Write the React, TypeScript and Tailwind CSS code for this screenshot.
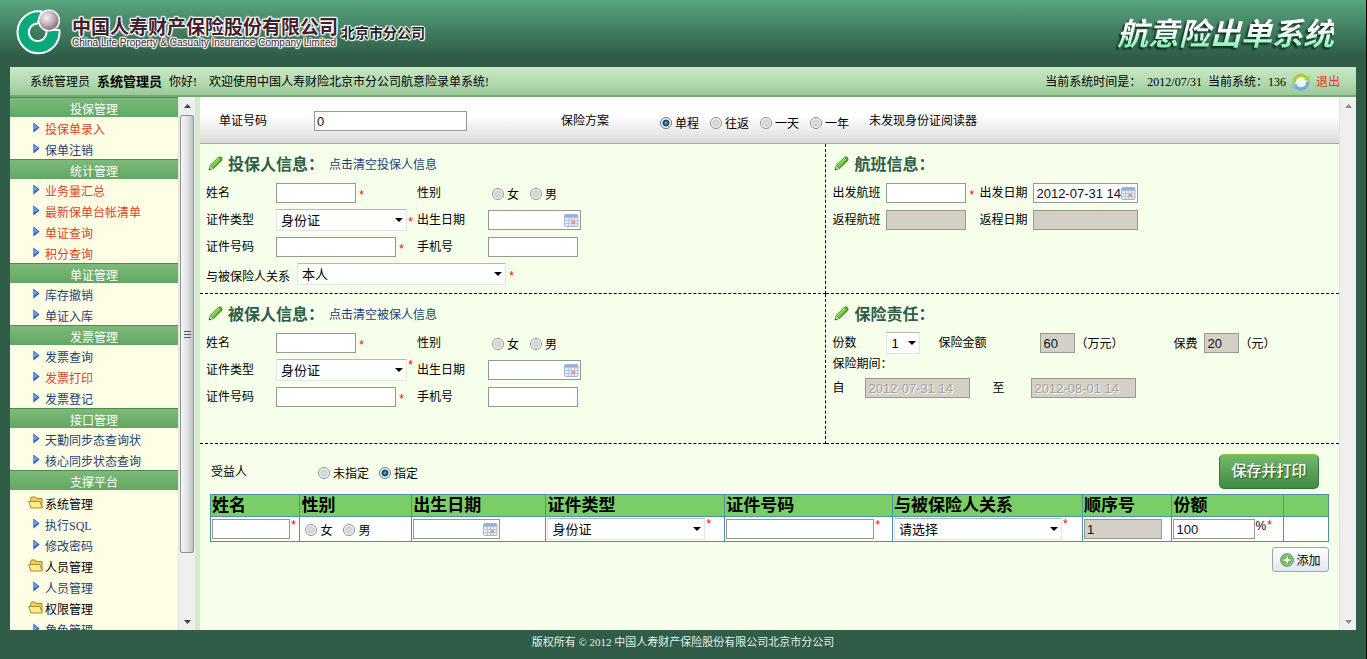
import type { ReactNode } from 'react';

type MenuItem = { text: string; hot?: boolean; folder?: boolean };

const menu: { title: string; items: MenuItem[] }[] = [
  { title: '投保管理', items: [{ text: '投保单录入', hot: true }, { text: '保单注销' }] },
  {
    title: '统计管理',
    items: [
      { text: '业务量汇总', hot: true },
      { text: '最新保单台帐清单', hot: true },
      { text: '单证查询', hot: true },
      { text: '积分查询', hot: true },
    ],
  },
  { title: '单证管理', items: [{ text: '库存撤销' }, { text: '单证入库' }] },
  { title: '发票管理', items: [{ text: '发票查询' }, { text: '发票打印', hot: true }, { text: '发票登记' }] },
  { title: '接口管理', items: [{ text: '天勤同步态查询状' }, { text: '核心同步状态查询' }] },
  {
    title: '支撑平台',
    items: [
      { text: '系统管理', folder: true },
      { text: '执行SQL' },
      { text: '修改密码' },
      { text: '人员管理', folder: true },
      { text: '人员管理' },
      { text: '权限管理', folder: true },
      { text: '角色管理' },
    ],
  },
];

function Logo() {
  return (
    <svg width="46" height="46" viewBox="0 0 46 46" className="shrink-0">
      <defs>
        <radialGradient id="ball" cx="0.38" cy="0.35" r="0.7">
          <stop offset="0" stopColor="#f8f0f3" />
          <stop offset="0.5" stopColor="#c4b0ba" />
          <stop offset="1" stopColor="#7b606e" />
        </radialGradient>
      </defs>
      <path
        d="M27 2.6 A21 21 0 1 0 44.4 21 H31.2 A8.8 8.8 0 1 1 22.5 14.4 Z"
        fill="#08a97b"
        stroke="#fff"
        strokeWidth="2"
        strokeLinejoin="round"
      />
      <circle cx="34" cy="11.5" r="10.4" fill="url(#ball)" stroke="#fff" strokeWidth="1.4" />
    </svg>
  );
}

function Pencil() {
  return (
    <svg width="15" height="15" viewBox="0 0 15 15" className="shrink-0">
      <path d="M1 14 L2.2 9 L10 1.2 Q12 -0.2 13.8 1.5 Q15 3.2 13.8 5 L6 12.6 Z" fill="#3f9a26" />
      <path d="M3.4 10.2 L11.4 2.2 L12.8 3.6 L5 11.6 Z" fill="#86d148" />
      <path d="M3.2 9.6 L11 1.8" stroke="#d2f2a4" strokeWidth="0.9" />
      <path d="M1 14 L2.2 9.4 L5.6 12.6 Z" fill="#cfe0a8" stroke="#4c8a3a" strokeWidth="0.6" />
      <path d="M0.8 14.3 L1.4 12.2 L2.9 13.5 Z" fill="#333" />
    </svg>
  );
}

function Calendar() {
  return (
    <svg width="15" height="13" viewBox="0 0 15 13" className="pointer-events-none absolute right-[2px] top-[4px]">
      <rect x="0.5" y="0.5" width="13.5" height="12" rx="1" fill="#e4ebf6" stroke="#a3b6d6" />
      <rect x="1" y="1" width="12.5" height="2.6" fill="#93afde" />
      <path d="M1.5 6.5h12M1.5 9.5h12M4.5 4v8M7.5 4v8M10.5 4v8" stroke="#b6c6e0" strokeWidth="1" />
      <rect x="8" y="7" width="3" height="3" fill="#e89a7c" />
    </svg>
  );
}

function Refresh() {
  return (
    <svg width="18" height="20" viewBox="0 0 18 20">
      <circle cx="9" cy="10" r="6.4" fill="#eef7e6" />
      <path d="M2.2 10.6 A6.9 6.9 0 0 1 15.4 7.4" fill="none" stroke="#a9cf3a" strokeWidth="3.4" />
      <path d="M12 7.6 L17.8 3.6 L17.6 9.8 Z" fill="#a9cf3a" />
      <path d="M15.8 9.6 A6.9 6.9 0 0 1 2.6 12.8" fill="none" stroke="#72a9ea" strokeWidth="3.4" />
      <path d="M6 12.6 L0.2 16.6 L0.4 10.4 Z" fill="#8fbdf2" />
    </svg>
  );
}

function Arrow() {
  return (
    <svg width="7" height="11" viewBox="0 0 7 11">
      <path d="M0.4 0.4 L6.6 5.5 L0.4 10.6 Z" fill="#2458c0" />
      <path d="M1.2 2 L5 5.2 L1.2 7.4 Z" fill="#6fa4f4" />
    </svg>
  );
}

function Folder() {
  return (
    <svg width="16" height="13" viewBox="0 0 16 13">
      <path d="M2.5 11.5 V2.5 L3.5 1 H7 L8.2 2.5 H14 V11.5 Z" fill="#f0cf58" stroke="#a5852a" />
      <path d="M3 12 L0.6 5.5 H12 L14.2 12 Z" fill="#fcec8c" stroke="#b08f30" />
    </svg>
  );
}

function Star({ high }: { high?: boolean }) {
  return (
    <span className={`w-[7px] shrink-0 text-center font-[Liberation_Sans] text-[12px] leading-[12px] text-[#f00] ${high ? 'self-start' : 'pt-[4px]'}`}>*</span>
  );
}

const box = 'h-[20px] border border-[#939a91] px-[2px] pt-px font-[Liberation_Sans] text-[13px] leading-[17px] text-[#111]';

function Text({ id, width, value, off, label }: { id?: string; width: string; value?: string; off?: boolean; label?: string }) {
  return (
    <input id={id} aria-label={label} defaultValue={value} readOnly={off} className={`${box} ${width} ${off ? 'bg-[#d4d0c8]' : 'bg-white'}`} />
  );
}

function DateBox({ id, width, value, label }: { id?: string; width: string; value?: string; label?: string }) {
  return (
    <span className={`relative inline-block h-[20px] ${width}`}>
      <input id={id} aria-label={label} defaultValue={value} className={`${box} w-full bg-white align-top`} />
      <Calendar />
    </span>
  );
}

function Select({ id, width, value, label }: { id?: string; width: string; value: string; label?: string }) {
  return (
    <span className={`relative inline-block h-[22px] shrink-0 ${width}`}>
      <select
        id={id}
        aria-label={label}
        className="h-full w-full appearance-none rounded-[1px] border border-[#dfe5ee] border-t-[#b4b9bd] bg-white pl-[4px] pt-px align-top font-[Liberation_Sans,Noto_Sans_CJK_SC,sans-serif] text-[13px] leading-[19px] text-black"
      >
        <option>{value}</option>
      </select>
      <svg width="8" height="4" viewBox="0 0 8 4" className="pointer-events-none absolute right-[4px] top-[9px]">
        <path d="M0 0h8l-4 4z" />
      </svg>
    </span>
  );
}

function Radio({ name, text, on }: { name: string; text: string; on?: boolean }) {
  return (
    <label className="flex items-center gap-[3px] whitespace-nowrap">
      <input
        type="radio"
        name={name}
        defaultChecked={on}
        className="h-[12px] w-[12px] shrink-0 appearance-none rounded-full border border-[#8c9290] bg-[radial-gradient(circle_closest-side,#e2e4e5_0%,#c9cdcf_65%,#f8f8f8_85%)] checked:border-[#6a7882] checked:bg-[radial-gradient(circle_closest-side,#6cc4e8_0%,#1b5c86_40%,#123f60_60%,#f4f7f8_78%)]"
      />
      <span className="pt-[2px]">{text}</span>
    </label>
  );
}

function PanelTitle({ children, link }: { children: ReactNode; link?: string }) {
  return (
    <div className="flex h-[31px] items-center pl-[2px]">
      <Pencil />
      <h2 className="ml-[5px] pb-px font-[Noto_Sans_CJK_SC,sans-serif] text-[16px] font-bold leading-[20px] text-[#2f5d47]">{children}</h2>
      {link && (
        <a href="#" className="ml-[5px] pt-[2px] text-[#1d3f77]">
          {link}
        </a>
      )}
    </div>
  );
}

function PersonPanel({ id, title, link, relation }: { id: string; title: string; link: string; relation?: boolean }) {
  return (
    <section className="min-h-[150px] border-b border-r border-dashed border-black pl-[6px] pt-[4px]">
      <PanelTitle link={link}>{title}</PanelTitle>
      <div className="grid auto-rows-[27px] grid-cols-[70px_141px_71px_1fr] items-center">
        <label htmlFor={`${id}-name`}>姓名</label>
        <div className="flex items-center gap-[2px]">
          <Text id={`${id}-name`} width="w-[80px]" />
          <Star />
        </div>
        <span>性别</span>
        <div className="flex gap-[11px] pl-[4px] pt-[2px]">
          <Radio name={`${id}-sex`} text="女" />
          <Radio name={`${id}-sex`} text="男" />
        </div>
        <label htmlFor={`${id}-type`}>证件类型</label>
        <div className="flex items-center">
          <Select id={`${id}-type`} width="w-[131px]" value="身份证" />
          <Star high={!relation} />
        </div>
        <label htmlFor={`${id}-birth`}>出生日期</label>
        <DateBox id={`${id}-birth`} width="w-[93px]" />
        <label htmlFor={`${id}-no`}>证件号码</label>
        <div className="flex items-center gap-[2px]">
          <Text id={`${id}-no`} width="w-[120px]" />
          <Star />
        </div>
        <label htmlFor={`${id}-phone`}>手机号</label>
        <Text id={`${id}-phone`} width="w-[90px]" />
        {relation && (
          <div className="col-span-4 flex items-center">
            <label htmlFor={`${id}-rel`} className="w-[91px] pt-[6px]">
              与被保险人关系
            </label>
            <Select id={`${id}-rel`} width="w-[209px]" value="本人" />
            <span className="w-[2px]" />
            <Star />
          </div>
        )}
      </div>
    </section>
  );
}

function ScrollBar({ thumb }: { thumb?: boolean }) {
  return (
    <div className="flex w-[17px] shrink-0 flex-col items-center border-l border-[#e2e2e2] bg-[#efefef]">
      <div className="flex h-[18px] shrink-0 items-center">
        <svg width="7" height="4" viewBox="0 0 7 4">
          <path d="M0 4h7L3.5 0z" fill={thumb ? '#444' : '#8a8a8a'} />
        </svg>
      </div>
      <div className="min-h-0 w-full flex-1 pl-px pr-px">
        {thumb && (
          <div className="flex h-[88%] flex-col items-center justify-center gap-[2px] rounded-[2px] border border-[#8f9294] bg-linear-to-r from-[#f6f6f6] via-[#e2e3e5] to-[#bfc2c6]">
            <span className="h-px w-[7px] bg-[#555]" />
            <span className="h-px w-[7px] bg-[#555]" />
            <span className="h-px w-[7px] bg-[#555]" />
          </div>
        )}
      </div>
      <div className="flex h-[17px] shrink-0 items-center">
        <svg width="7" height="4" viewBox="0 0 7 4">
          <path d="M0 0h7L3.5 4z" fill={thumb ? '#444' : '#8a8a8a'} />
        </svg>
      </div>
    </div>
  );
}

function Sidebar() {
  return (
    <nav className="w-[168px] shrink-0 overflow-y-auto bg-[#fefee4] [scrollbar-width:none]">
      {menu.map((group) => (
        <div key={group.title}>
          <h3 className="h-[20px] border-t border-[#4c8c50] bg-linear-to-b from-[#7cba7a] to-[#62a763] pt-[3px] text-center leading-[18px] text-white">
            {group.title}
          </h3>
          <div className={group.items[0].folder ? 'pt-[2px]' : ''}>
            {group.items.map((item, i) => (
              <a key={i} href="#" className="flex h-[21px] items-center pl-[18px]">
                <span className={item.folder ? 'w-[17px]' : 'w-[17px] pl-[5px]'}>{item.folder ? <Folder /> : <Arrow />}</span>
                <span className={`pt-[4px] ${item.folder ? 'text-black' : item.hot ? 'text-[#d8452c]' : 'text-[#1d3f77]'}`}>{item.text}</span>
              </a>
            ))}
          </div>
        </div>
      ))}
    </nav>
  );
}

function Beneficiary() {
  const th = 'h-[22px] border border-[#4f93a3] p-0 pl-px text-left text-[17px] font-bold leading-[20px]';
  const td = 'h-[25px] border border-[#4f93a3] p-0 pl-px';
  return (
    <section className="px-[10px]">
      <div className="flex h-[50px] items-center pt-[5px]">
        <span className="w-[108px] pl-px">受益人</span>
        <div className="flex flex-1 gap-[10px] pt-[3px]">
          <Radio name="assign" text="未指定" />
          <Radio name="assign" text="指定" on />
        </div>
        <button className="mr-[10px] h-[35px] w-[100px] rounded-[5px] border border-[#2f7a36] border-t-[#8cc63f] bg-linear-to-b from-[#74b86c] to-[#3e8c42] pb-[3px] font-[Noto_Sans_CJK_SC,sans-serif] text-[15px] font-medium text-white [text-shadow:1px_1px_1px_#245a28]">
          保存并打印
        </button>
      </div>
      <table className="w-full table-fixed border-collapse bg-white">
        <thead className="bg-[#7bce67]">
          <tr>
            <th className={`${th} w-[8%]`}>姓名</th>
            <th className={`${th} w-[10%]`}>性别</th>
            <th className={`${th} w-[12%]`}>出生日期</th>
            <th className={`${th} w-[16%]`}>证件类型</th>
            <th className={`${th} w-[15%]`}>证件号码</th>
            <th className={`${th} w-[17%]`}>与被保险人关系</th>
            <th className={`${th} w-[8%]`}>顺序号</th>
            <th className={`${th} w-[10%]`}>份额</th>
            <th className={`${th} w-[4%]`}></th>
          </tr>
        </thead>
        <tbody>
          <tr>
            <td className={td}>
              <div className="flex items-center">
                <Text width="w-[78px]" label="姓名" />
                <Star high />
              </div>
            </td>
            <td className={td}>
              <div className="flex gap-[11px] pl-[4px] pt-[2px]">
                <Radio name="b-sex" text="女" />
                <Radio name="b-sex" text="男" />
              </div>
            </td>
            <td className={td}>
              <div className="flex">
                <DateBox width="w-[87px]" label="出生日期" />
              </div>
            </td>
            <td className={td}>
              <div className="flex items-center">
                <Select width="w-[158px]" value="身份证" label="证件类型" />
                <Star high />
              </div>
            </td>
            <td className={td}>
              <div className="flex items-center">
                <Text width="w-[148px]" label="证件号码" />
                <Star high />
              </div>
            </td>
            <td className={td}>
              <div className="flex items-center">
                <Select width="w-[168px]" value="请选择" label="与被保险人关系" />
                <Star high />
              </div>
            </td>
            <td className={td}>
              <div className="flex">
                <Text width="w-[78px]" value="1" off label="顺序号" />
              </div>
            </td>
            <td className={td}>
              <div className="flex items-center">
                <Text width="w-[82px]" value="100" label="份额" />
                <span className="self-start font-[Liberation_Sans] leading-[14px]">%</span>
                <Star high />
              </div>
            </td>
            <td className={td}></td>
          </tr>
        </tbody>
      </table>
      <div className="flex justify-end pt-[5px]">
        <button className="flex h-[25px] w-[57px] items-center justify-center gap-[2px] rounded-[3px] border border-[#9aa5b0] bg-linear-to-b from-white to-[#e2e8f2]">
          <svg width="14" height="14" viewBox="0 0 14 14">
            <circle cx="7" cy="7" r="6.3" fill="#6cb85c" stroke="#4b9444" />
            <circle cx="7" cy="7" r="5.2" fill="none" stroke="#a6d99a" strokeWidth="0.8" />
            <path d="M7 3.8v6.4M3.8 7h6.4" stroke="#fff" strokeWidth="2" />
          </svg>
          <span className="pt-[2px]">添加</span>
        </button>
      </div>
    </section>
  );
}

export default function App() {
  return (
    <div className="flex h-screen flex-col border-r border-black bg-[#2f5d47] font-[Liberation_Serif,Noto_Sans_CJK_SC,serif] text-[12px] leading-[16px] text-black">
      <header className="flex h-[67px] shrink-0 items-center justify-between bg-linear-to-b from-[#58a67f] to-[#2f5d47] to-85% pb-[4px] pl-[15px] pr-[32px]">
        <div className="flex items-center">
          <Logo />
          <div className="ml-[11px] pt-[3px] text-[#42202e] [text-shadow:1px_0_1px_#fff,-1px_0_1px_#fff,0_1px_1px_#fff,0_-1px_1px_#fff,1px_1px_1px_#fff,-1px_-1px_1px_#fff,1px_-1px_1px_#fff,-1px_1px_1px_#fff]">
            <div className="font-[Noto_Sans_CJK_SC,sans-serif] text-[19px] font-bold leading-[20px]">中国人寿财产保险股份有限公司</div>
            <div className="font-[Liberation_Sans,sans-serif] text-[10px] leading-[14px]">China Life Property &amp; Casualty Insurance Company Limited</div>
          </div>
          <div className="ml-[3px] font-[Noto_Sans_CJK_SC,sans-serif] text-[14px] font-bold text-[#222] [text-shadow:1px_0_1px_#fff,-1px_0_1px_#fff,0_1px_1px_#fff,0_-1px_1px_#fff,1px_1px_1px_#fff,-1px_-1px_1px_#fff]">
            北京市分公司
          </div>
        </div>
        <h1 className="bg-linear-to-b from-white from-45% to-[#8df0bf] to-85% bg-clip-text font-[Noto_Sans_CJK_SC,sans-serif] text-[31px] font-bold italic leading-[40px] text-transparent [filter:drop-shadow(-2px_2px_1px_#0c2a1c)]">
          航意险出单系统
        </h1>
      </header>

      <div className="mx-[10px] flex h-[30px] shrink-0 items-center justify-between border-b-2 border-[#74a873] bg-linear-to-b from-[#c8e9c6] via-[#b5dbb3] to-[#9bc999] pl-[20px] pr-[16px] pt-px">
        <div className="flex items-center gap-[7px]">
          <span>系统管理员</span>
          <b className="text-[13px]">系统管理员</b>
          <span>你好!</span>
          <span className="pl-[5px]">欢迎使用中国人寿财险北京市分公司航意险录单系统!</span>
        </div>
        <div className="flex items-center gap-[6px]">
          <span>当前系统时间是：</span>
          <span>2012/07/31</span>
          <span>当前系统：136</span>
          <Refresh />
          <a href="#" className="text-[#e03a20]">
            退出
          </a>
        </div>
      </div>

      <div className="mx-[10px] flex min-h-0 flex-1">
        <Sidebar />
        <ScrollBar thumb />
        <div className="w-[5px] shrink-0 bg-[#d2ebc8]" />
        <main className="min-w-0 flex-1 overflow-hidden bg-[#f5ffe9]">
          <div className="flex h-[47px] items-center border-b border-[#a9a9a9] bg-linear-to-b from-white from-40% to-[#dcdcdc] pl-[19px] pt-[2px]">
            <label htmlFor="doc-no" className="w-[95px]">
              单证号码
            </label>
            <Text id="doc-no" width="w-[153px]" value="0" />
            <span className="ml-[94px] w-[99px]">保险方案</span>
            <div className="flex gap-[11px] pt-[3px]">
              <Radio name="plan" text="单程" on />
              <Radio name="plan" text="往返" />
              <Radio name="plan" text="一天" />
              <Radio name="plan" text="一年" />
            </div>
            <span className="ml-[20px]">未发现身份证阅读器</span>
          </div>

          <div className="grid grid-cols-[11fr_9fr]">
            <PersonPanel id="holder" title="投保人信息：" link="点击清空投保人信息" relation />
            <section className="border-b border-dashed border-black pl-[6px] pt-[4px]">
              <PanelTitle>航班信息：</PanelTitle>
              <div className="grid auto-rows-[27px] grid-cols-[54px_93px_54px_1fr] items-center">
                <label htmlFor="go-flight">出发航班</label>
                <div className="flex items-center gap-[2px]">
                  <Text id="go-flight" width="w-[80px]" />
                  <Star />
                </div>
                <label htmlFor="go-date">出发日期</label>
                <DateBox id="go-date" width="w-[105px]" value="2012-07-31 14" />
                <label htmlFor="back-flight">返程航班</label>
                <Text id="back-flight" width="w-[80px]" off />
                <label htmlFor="back-date">返程日期</label>
                <Text id="back-date" width="w-[105px]" off />
              </div>
            </section>

            <PersonPanel id="insured" title="被保人信息：" link="点击清空被保人信息" />
            <section className="border-b border-dashed border-black pl-[6px] pt-[4px]">
              <PanelTitle>保险责任：</PanelTitle>
              <div className="grid h-[27px] grid-cols-[54px_52px_102px_133px_31px_1fr] items-center">
                <label htmlFor="copies">份数</label>
                <Select id="copies" width="w-[34px]" value="1" />
                <label htmlFor="amount">保险金额</label>
                <div className="flex items-center">
                  <Text id="amount" width="w-[35px]" value="60" off />
                  <span className="pt-[3px]">（万元）</span>
                </div>
                <label htmlFor="fee" className="pt-[3px]">
                  保费
                </label>
                <div className="flex items-center">
                  <Text id="fee" width="w-[35px]" value="20" off />
                  <span className="pt-[3px]">（元）</span>
                </div>
              </div>
              <div>保险期间：</div>
              <div className="grid h-[32px] grid-cols-[33px_127px_39px_1fr] items-center">
                <label htmlFor="from">自</label>
                <input id="from" disabled defaultValue="2012-07-31 14" className={`${box} w-[105px] bg-[#d4d0c8] text-[#a3a19b] [text-shadow:1px_1px_0_#fff]`} />
                <label htmlFor="to">至</label>
                <input id="to" disabled defaultValue="2012-08-01 14" className={`${box} w-[105px] bg-[#d4d0c8] text-[#a3a19b] [text-shadow:1px_1px_0_#fff]`} />
              </div>
            </section>
          </div>

          <Beneficiary />
        </main>
        <ScrollBar />
      </div>

      <footer className="flex h-[29px] shrink-0 items-center justify-center pb-[5px] text-[11px] text-[#e3f1e6]">
        版权所有 © 2012 中国人寿财产保险股份有限公司北京市分公司
      </footer>
    </div>
  );
}
